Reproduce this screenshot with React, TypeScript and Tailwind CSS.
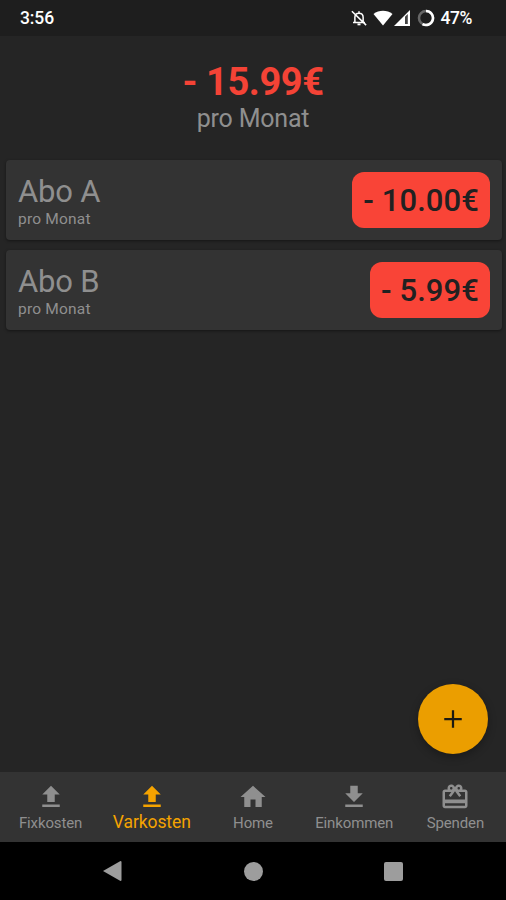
const UPLOAD = "M9 16h6v-6h4l-7-7-7 7h4zm-4 2h14v2H5z";
const DOWNLOAD = "M19 9h-4V3H9v6H5l7 7 7-7zM5 18v2h14v-2H5z";
const HOME = "M10 20v-6h4v6h5v-8h3L12 3 2 12h3v8z";
const REDEEM =
  "M20 6h-2.18c.11-.31.18-.65.18-1 0-1.66-1.34-3-3-3-1.05 0-1.96.54-2.5 1.35l-.5.67-.5-.68C10.96 2.54 10.05 2 9 2 7.34 2 6 3.34 6 5c0 .35.07.69.18 1H4c-1.11 0-1.99.89-1.99 2L2 19c0 1.11.89 2 2 2h16c1.11 0 2-.89 2-2V8c0-1.11-.89-2-2-2zm-5-2c.55 0 1 .45 1 1s-.45 1-1 1-1-.45-1-1 .45-1 1-1zM9 4c.55 0 1 .45 1 1s-.45 1-1 1-1-.45-1-1 .45-1 1-1zm11 15H4v-2h16v2zm0-5H4V8h5.08L7 10.83 8.62 12 11 8.76l1-1.36 1 1.36L15.38 12 17 10.83 14.92 8H20v6z";

const tabs = [
  { label: "Fixkosten", icon: UPLOAD },
  { label: "Varkosten", icon: UPLOAD, active: true },
  { label: "Home", icon: HOME },
  { label: "Einkommen", icon: DOWNLOAD },
  { label: "Spenden", icon: REDEEM },
];

const items = [
  { name: "Abo A", amount: "- 10.00€" },
  { name: "Abo B", amount: "- 5.99€" },
];

function StatusBar() {
  return (
    <header className="flex h-9 shrink-0 items-center bg-[#1e1e1e] pl-5 pr-[34px] pt-px text-[17px] font-medium text-white">
      <span className="text-[17.500px] tracking-[-0.1px]">3:56</span>
      <div className="ml-auto flex items-center">
        <svg className="-mt-px h-[18px] w-[18px]" viewBox="0 0 24 24" fill="none" stroke="white" strokeWidth="2">
          <path d="M6.5 18V11c0-3.200 2.200-5.500 5.500-5.500s5.500 2.300 5.500 5.500v7M4 18h16M12 3v2.500M2.500 3l19 18.500" />
          <path d="M10 20.500h4" strokeWidth="2.500" />
        </svg>
        <svg className="-mt-[2px] ml-[5px] h-4 w-5" viewBox="0 0 20 16" fill="white">
          <path d="M.5 4C6-.4 14-.4 19.500 4L10 15.500z" />
        </svg>
        <svg className="-mt-[2px] ml-px h-4 w-4" viewBox="0 0 16 16">
          <path d="M0 16 16 0V16z" fill="white" />
          <path d="M11 6.800 13.800 4V14H11z" fill="#444" />
        </svg>
        <svg className="-mt-[2px] ml-[7px] h-[18px] w-[18px]" viewBox="0 0 18 18" fill="none" strokeWidth="2.600">
          <circle cx="9" cy="9" r="7" stroke="#666" />
          <path d="M9 2a7 7 0 1 1-3.500 13.060" stroke="white" />
        </svg>
        <span className="ml-[5px] text-[17.500px] tracking-[-0.400px]">47%</span>
      </div>
    </header>
  );
}

export default function App() {
  return (
    <div className="flex h-[900px] w-[506px] flex-col overflow-hidden bg-[#252525] font-['Roboto',sans-serif] text-[#8f8f8f]">
      <StatusBar />
      <main className="relative flex min-h-0 flex-1 flex-col">
        <div className="flex flex-col items-center pt-[24px]">
          <h1 className="text-[38px] font-bold leading-[44px] tracking-[-0.400px] text-[#f44336]">- 15.99€</h1>
          <p className="text-[25px] leading-[29px] tracking-[-0.200px]">pro Monat</p>
        </div>
        <ul className="mt-[27.400px] flex flex-col gap-[10px] pl-[6px] pr-[4px]">
          {items.map((item) => (
            <li
              key={item.name}
              className="flex h-20 items-center justify-between rounded-[4px] bg-[#333333] px-3 shadow-[0_1px_3px_rgba(0,0,0,0.45)]"
            >
              <div className="flex flex-col pt-[3px]">
                <span className="text-[31px] leading-[34px] tracking-[-0.200px]">{item.name}</span>
                <span className="text-[15.500px] leading-[20px] tracking-[0.200px]">pro Monat</span>
              </div>
              <span className="flex h-14 items-center rounded-[12px] bg-[#f94437] px-[11px] pt-[2px] text-[31px] font-medium tracking-[0.100px] text-[#212121]">
                {item.amount}
              </span>
            </li>
          ))}
        </ul>
        <button
          aria-label="Hinzufügen"
          className="absolute bottom-[18.500px] right-[18.500px] flex h-[70px] w-[70px] items-center justify-center rounded-full bg-[#eb9e00] shadow-[0_3px_8px_rgba(0,0,0,0.3)]"
        >
          <svg className="h-[30px] w-[30px]" viewBox="0 0 24 24" fill="#1c1a12">
            <path d="M19 12.900h-6.100V19h-1.800v-6.100H5v-1.800h6.100V5h1.800v6.100H19z" />
          </svg>
        </button>
      </main>
      <nav className="grid h-[70px] shrink-0 grid-cols-5 bg-[#333333]">
        {tabs.map((tab) => (
          <div key={tab.label} className={`flex flex-col items-center pt-[10px] ${tab.active ? "text-[#f5a300]" : ""}`}>
            <svg className="h-[30px] w-[30px] shrink-0" viewBox="0 0 24 24" fill="currentColor">
              <path d={tab.icon} />
            </svg>
            <span
              className={
                tab.active
                  ? "text-[17.500px] leading-[20px] tracking-[-0.100px]"
                  : "pt-[2px] text-[15px] leading-[18px] tracking-[-0.120px]"
              }
            >
              {tab.label}
            </span>
          </div>
        ))}
      </nav>
      <footer className="flex h-[58px] shrink-0 items-center bg-black text-[#9d9d9d]">
        <svg className="ml-[103px] h-5 w-[19px]" viewBox="0 0 19 20" fill="currentColor">
          <path d="M0 10 17.500 0q1 0 1 1v18q0 1-1 1z" />
        </svg>
        <span className="ml-[122px] h-[19px] w-[19px] rounded-full bg-[#9d9d9d]" />
        <span className="ml-[121px] h-[19px] w-[19px] rounded-[2px] bg-[#9d9d9d]" />
      </footer>
    </div>
  );
}
